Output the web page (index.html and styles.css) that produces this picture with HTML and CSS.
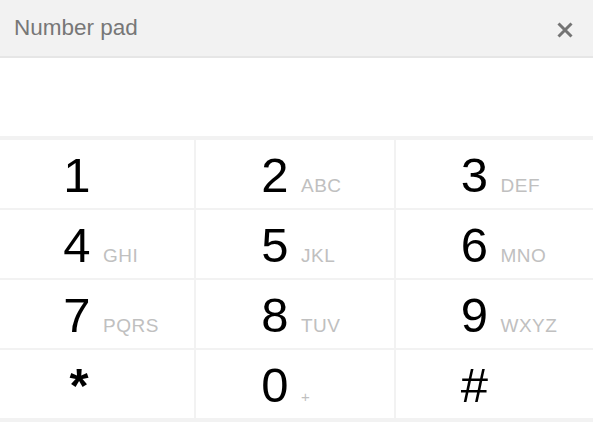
FILE: index.html
```html
<!DOCTYPE html>
<html lang="en">
<head>
<meta charset="utf-8">
<title>Number pad</title>
<link rel="stylesheet" href="styles.css">
</head>
<body>
<div class="dialog">
  <header class="header">
    <span class="title">Number pad</span>
    <button class="close" aria-label="Close">
      <svg width="16" height="16" viewBox="0 0 16 16"><path d="M1.5 1.5L14.5 14.5M14.5 1.5L1.5 14.5" stroke="#747474" stroke-width="3" stroke-linecap="butt"/></svg>
    </button>
  </header>
  <div class="display"></div>
  <div class="keys">
    <div class="key"><span class="digit">1</span><span class="letters"></span></div>
    <div class="key"><span class="digit">2</span><span class="letters">ABC</span></div>
    <div class="key"><span class="digit">3</span><span class="letters">DEF</span></div>
    <div class="key"><span class="digit">4</span><span class="letters">GHI</span></div>
    <div class="key"><span class="digit">5</span><span class="letters">JKL</span></div>
    <div class="key"><span class="digit">6</span><span class="letters">MNO</span></div>
    <div class="key"><span class="digit">7</span><span class="letters">PQRS</span></div>
    <div class="key"><span class="digit">8</span><span class="letters">TUV</span></div>
    <div class="key"><span class="digit">9</span><span class="letters">WXYZ</span></div>
    <div class="key"><span class="digit star">*</span><span class="letters"></span></div>
    <div class="key"><span class="digit">0</span><span class="letters plus">+</span></div>
    <div class="key"><span class="digit">#</span><span class="letters"></span></div>
  </div>
</div>
</body>
</html>
```
FILE: styles.css
```css
html, body {
  margin: 0;
  padding: 0;
  background: #f2f2f2;
  font-family: "Liberation Sans", Arial, sans-serif;
}

.dialog {
  width: 593px;
  display: flex;
  flex-direction: column;
}

.header {
  height: 56px;
  background: #f2f2f2;
  border-bottom: 2px solid #e6e6e6;
  display: flex;
  align-items: center;
  justify-content: space-between;
  padding: 0 20px 0 14px;
}

.title {
  font-size: 22.5px;
  color: #777;
  line-height: 1;
  margin-top: 1px;
}

.close {
  width: 16px;
  height: 16px;
  padding: 0;
  border: 0;
  background: none;
  display: flex;
  margin-top: 3px;
}

.display {
  height: 78px;
  background: #fff;
}

.keys {
  display: grid;
  grid-template-columns: 194px 198px 1fr;
  grid-auto-rows: 68px;
  gap: 2px;
  padding: 4px 0;
  background: #f2f2f2;
}

.key {
  background: #fff;
  display: flex;
  align-items: baseline;
  justify-content: center;
  padding-top: 5px;
}

.digit {
  width: 40px;
  text-align: center;
  font-size: 49px;
  line-height: 60px;
  color: #000;
}

.star {
  font-weight: bold;
  padding-left: 4px;
}

.letters {
  width: 34px;
  margin-left: 6px;
  white-space: nowrap;
  font-size: 19px;
  letter-spacing: 0.5px;
  color: #c0c0c0;
}

.plus {
  font-size: 15px;
}
```
